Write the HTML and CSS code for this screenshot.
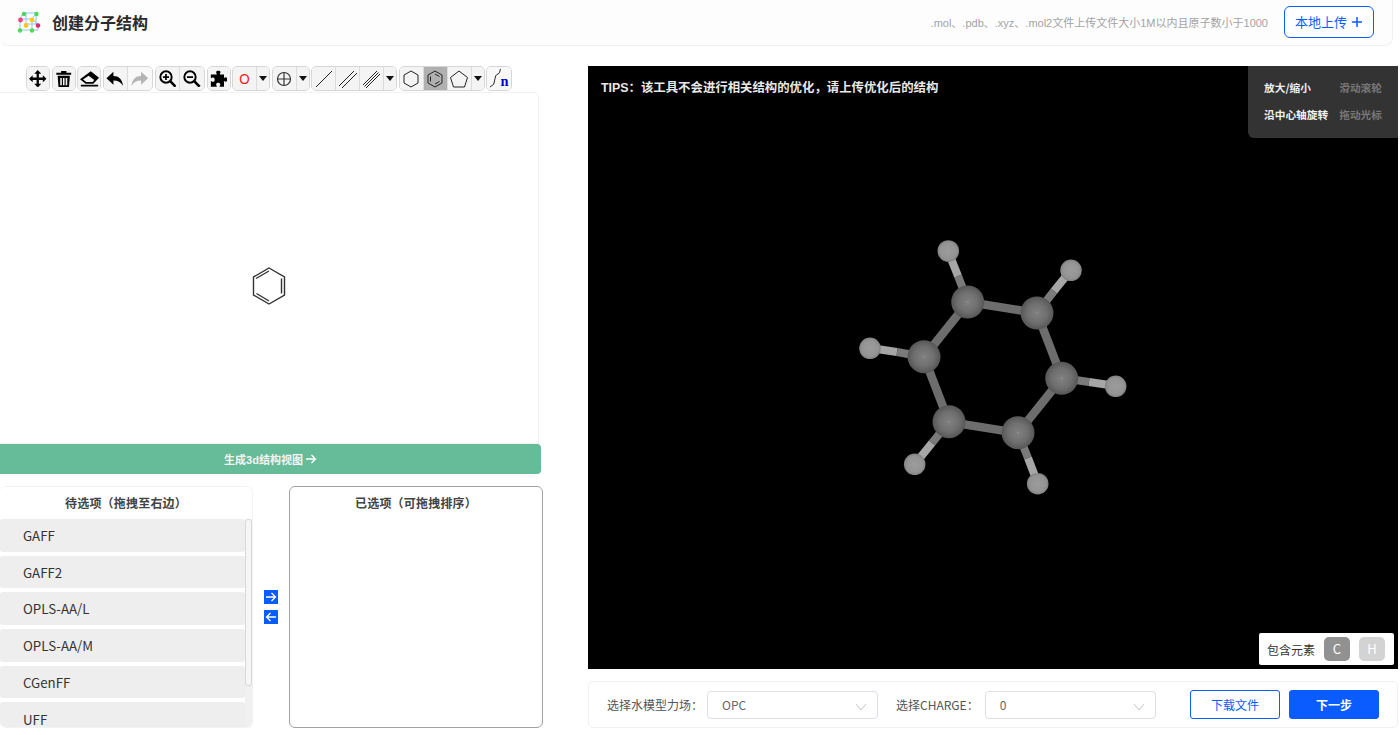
FILE: index.html
```html
<!DOCTYPE html>
<html lang="zh">
<head>
<meta charset="utf-8">
<title>创建分子结构</title>
<link rel="stylesheet" href="styles.css">
</head>
<body>
<header class="header">
  <div class="brand">
    <svg class="logo" viewBox="0 0 24 22" width="24" height="22">
      <g stroke="#8fc7f5" stroke-width="1" fill="none"><path d="M6 2H19M3 8H15V19H3ZM15 8L21 13M6 2L3 8M19 2L15 8M9 13H21V19H15M19 2V13M9 2V13"/></g>
      <circle cx="7" cy="3" r="2.2" fill="#4fd65c"/><circle cx="19.500" cy="3" r="2.2" fill="#4fd65c"/>
      <circle cx="3.500" cy="9" r="2.400" fill="#f0447c"/><circle cx="15" cy="9" r="2.400" fill="#ffc61f"/>
      <circle cx="21" cy="14.500" r="2.300" fill="#e6246e"/><circle cx="9" cy="14.500" r="2.400" fill="#ffc61f"/>
      <circle cx="3" cy="19.500" r="2.200" fill="#4fd65c"/><circle cx="15" cy="19.500" r="2.200" fill="#4fd65c"/>
    </svg>
    <h1 class="title">创建分子结构</h1>
  </div>
  <div class="upload">
    <span class="hint">.mol、.pdb、.xyz、.mol2文件上传文件大小1M以内且原子数小于1000</span>
    <button class="btn-upload">本地上传 <svg viewBox="0 0 12 12" width="12" height="12"><path d="M6 1V11M1 6H11" stroke="#0a5cff" stroke-width="1.500"/></svg></button>
  </div>
</header>

<main class="main">
  <section class="left">
    <div class="toolbar">
      <div class="group solo"><button class="tool"><svg viewBox="0 0 20 20"><path d="M10 0L14 4.200H11.300V8.700H15.800V6L20 10L15.800 14V11.300H11.300V15.800H14L10 20L6 15.800H8.700V11.300H4.200V14L0 10L4.200 6V8.700H8.700V4.200H6Z"/></svg></button></div>
      <div class="group solo"><button class="tool"><svg viewBox="0 0 20 20"><path d="M7 1H13V3H18.500V5.500H1.500V3H7ZM3 6.500H17L16 19.500H4ZM6 9V17.500H7.800V9ZM9.100 9V17.500H10.900V9ZM12.200 9V17.500H14V9Z" fill-rule="evenodd"/></svg></button></div>
      <div class="group solo wide"><button class="tool"><svg viewBox="0 0 22 20"><path d="M12.500 1.500L22 9L15.500 16H6.500L0 11ZM1 17.300H21V19.300H1Z"/><path d="M3.500 11.200L7.300 14H14.500L16.500 11.800L10 6.800Z" fill="#f4f4f4"/></svg></button></div>
      <div class="group filled">
        <button class="tool"><svg viewBox="0 0 20 20"><path d="M8.500 2V6.800C14.500 6.800 18.500 10.500 19.500 18C17 14 13.500 12 8.500 12V16.800L.5 9.300Z"/></svg></button>
        <button class="tool disabled"><svg viewBox="0 0 20 20"><path d="M11.500 2V6.800C5.500 6.800 1.500 10.500 .5 18C3 14 6.500 12 11.500 12V16.800L19.500 9.300Z" fill="#b4b4b4"/></svg></button>
      </div>
      <div class="group filled gap-l">
        <button class="tool"><svg viewBox="0 0 20 20"><circle cx="8" cy="8" r="6.500" fill="none" stroke="#000" stroke-width="2.200"/><path d="M12.500 12.500L19 19" stroke="#000" stroke-width="3"/><path d="M4.500 8H11.500M8 4.500V11.500" stroke="#000" stroke-width="2"/></svg></button>
        <button class="tool"><svg viewBox="0 0 20 20"><circle cx="8" cy="8" r="6.500" fill="none" stroke="#000" stroke-width="2.200"/><path d="M12.500 12.500L19 19" stroke="#000" stroke-width="3"/><path d="M4.500 8H11.500" stroke="#000" stroke-width="2"/></svg></button>
      </div>
      <div class="group solo"><button class="tool"><svg viewBox="0 0 20 20"><path d="M7 2.500C7 .3 12 .3 12 2.500C12 3.500 11.200 4 11.200 5H16V9C17 9 17.500 8.300 18 8.300C20.500 8.300 20.500 13.500 18 13.500C17.500 13.500 17 12.500 16 12.500V19H11C11 18 11.800 17.500 11.800 16.500C11.800 14 7 14 7 16.500C7 17.500 7.800 18 7.800 19H1V12.500C2 12.500 2.500 13.500 3.500 13.500C6 13.500 6 8.500 3.500 8.500C2.500 8.500 2 9.300 1 9.300V5H7.800C7.800 4 7 3.500 7 2.500Z"/></svg></button></div>
      <div class="group">
        <button class="tool"><span class="atom">O</span></button>
        <button class="caret"></button>
      </div>
      <div class="group">
        <button class="tool"><svg viewBox="0 0 20 20" fill="none" stroke="#333" stroke-width="1.200"><circle cx="10" cy="10" r="6.500"/><path d="M10 3.500V16.500M3.500 10H16.500"/></svg></button>
        <button class="caret"></button>
      </div>
      <div class="group">
        <button class="tool"><svg viewBox="0 0 20 20" stroke="#222" fill="none"><path d="M2 18L18 2"/></svg></button>
        <button class="tool"><svg viewBox="0 0 20 20" stroke="#222" fill="none"><path d="M1 17L16 2M4 19L19 4"/></svg></button>
        <button class="tool"><svg viewBox="0 0 20 20" stroke="#222" fill="none"><path d="M1 16L15 2M2.500 17.500L16.500 3.500M4 19L18 5"/></svg></button>
        <button class="caret"></button>
      </div>
      <div class="group">
        <button class="tool"><svg viewBox="0 0 20 20" stroke="#222" fill="none"><path d="M10 2L17 6V14L10 18L3 14V6Z"/></svg></button>
        <button class="tool active"><svg viewBox="0 0 20 20" stroke="#222" fill="none"><path d="M10 2L17 6V14L10 18L3 14V6ZM10 5L14.500 7.500M14.500 12.500L10 15M5.500 12.500V7.500"/></svg></button>
        <button class="tool"><svg viewBox="0 0 20 20" stroke="#222" fill="none"><path d="M10 2L18.500 8.500L15.500 18H4.500L1.500 8.500Z"/></svg></button>
        <button class="caret"></button>
      </div>
      <div class="group"><button class="tool chain"><svg viewBox="0 0 24 22" fill="none"><path d="M2 20L6 17L8 8L12 5L13 1" stroke="#222"/><text x="13" y="19" class="chain-n">n</text></svg></button></div>
    </div>

    <div class="sketch">
      <svg class="benzene" viewBox="0 0 36 40" width="36" height="40" fill="none" stroke="#333" stroke-width="1.400">
        <path d="M18 2L33.500 11V29L18 38L2.500 29V11Z"/>
        <path d="M5 12.500L18 5M30.500 12.500V27.500M5.500 27.500L18 35"/>
      </svg>
    </div>

    <button class="gen">生成3d结构视图 <svg viewBox="0 0 12 12" width="12" height="12" fill="none" stroke="#fff" stroke-width="1.300"><path d="M1 6H10.500M6.500 2L10.500 6L6.500 10"/></svg></button>

    <div class="transfer">
      <div class="list list-source">
        <div class="list-title">待选项（拖拽至右边）</div>
        <div class="list-body">
          <ul class="items">
            <li class="item">GAFF</li>
            <li class="item">GAFF2</li>
            <li class="item">OPLS-AA/L</li>
            <li class="item">OPLS-AA/M</li>
            <li class="item">CGenFF</li>
            <li class="item">UFF</li>
          </ul>
          <div class="scroll"><div class="thumb"></div></div>
        </div>
      </div>
      <div class="arrows">
        <span class="arrow"><svg viewBox="0 0 14 14" width="14" height="14" fill="none" stroke="#fff" stroke-width="1.300"><path d="M2 7H11.500M7.500 3L11.500 7L7.500 11"/></svg></span>
        <span class="arrow"><svg viewBox="0 0 14 14" width="14" height="14" fill="none" stroke="#fff" stroke-width="1.300"><path d="M12 7H2.500M6.500 3L2.500 7L6.500 11"/></svg></span>
      </div>
      <div class="list list-target">
        <div class="list-title">已选项（可拖拽排序）</div>
      </div>
    </div>
  </section>

  <section class="right">
    <div class="viewer">
      <svg class="molecule" viewBox="588 66 810 603" width="810" height="603">
        <defs>
          <radialGradient id="c" cx="50%" cy="50%" r="50%">
            <stop offset="0" stop-color="#969696"/><stop offset=".08" stop-color="#7e7e7e"/><stop offset=".6" stop-color="#6f6f6f"/><stop offset="1" stop-color="#565656"/>
          </radialGradient>
          <radialGradient id="h" cx="50%" cy="50%" r="50%">
            <stop offset="0" stop-color="#9c9c9c"/><stop offset=".75" stop-color="#949494"/><stop offset="1" stop-color="#808080"/>
          </radialGradient>
        </defs>
        <g class="bond-ch">
          <path d="M968 302L958 276M1037 313L1054 291M1062 378L1089 382M1018 433L1028 458M949 422L932 443M924 357L897 352"/>
        </g>
        <g class="bond-hh">
          <path d="M958 276L948 251M1054 291L1071 270M1089 382L1116 386M1028 458L1038 484M932 443L915 464M897 352L870 348"/>
        </g>
        <path class="bond-cc" d="M968 302L1037 313L1062 378L1018 433L949 422L924 357Z"/>
        <g fill="url(#h)">
          <circle cx="948.300" cy="251" r="10.800"/><circle cx="1071" cy="270.300" r="10.800"/><circle cx="1115.700" cy="386.300" r="10.800"/>
          <circle cx="1037.700" cy="483.700" r="10.800"/><circle cx="914.700" cy="464.300" r="10.800"/><circle cx="870" cy="348.300" r="10.800"/>
        </g>
        <g fill="url(#c)">
          <circle cx="967.700" cy="302" r="16.500"/><circle cx="1037" cy="313" r="16.500"/><circle cx="1061.700" cy="378.300" r="16.500"/>
          <circle cx="1018" cy="432.700" r="16.500"/><circle cx="949" cy="421.700" r="16.500"/><circle cx="924" cy="356.700" r="16.500"/>
        </g>
      </svg>
      <p class="tips">TIPS：该工具不会进行相关结构的优化，请上传优化后的结构</p>
      <div class="help">
        <div class="help-row"><span>放大/缩小</span><span class="help-key">滑动滚轮</span></div>
        <div class="help-row"><span>沿中心轴旋转</span><span class="help-key">拖动光标</span></div>
      </div>
      <div class="elements">
        <span class="el-label">包含元素</span>
        <span class="chip chip-c">C</span>
        <span class="chip chip-h">H</span>
      </div>
    </div>
    <div class="options">
      <label class="field field-water">选择水模型力场：<span class="select"><span>OPC</span><svg class="chev" viewBox="0 0 12 8" width="12" height="8" fill="none" stroke="#c4c4c4"><path d="M1 1L6 7L11 1"/></svg></span></label>
      <label class="field field-charge">选择CHARGE：<span class="select"><span>0</span><svg class="chev" viewBox="0 0 12 8" width="12" height="8" fill="none" stroke="#c4c4c4"><path d="M1 1L6 7L11 1"/></svg></span></label>
      <div class="actions">
        <button class="btn btn-outline">下载文件</button>
        <button class="btn btn-primary">下一步</button>
      </div>
    </div>
  </section>
</main>
</body>
</html>
```
FILE: styles.css
```css
* { box-sizing: border-box; }
html, body { margin: 0; padding: 0; }
body {
  width: 1400px;
  height: 735px;
  overflow: hidden;
  background: #fff;
  font-family: "Noto Sans CJK SC", "Noto Sans", sans-serif;
  color: #333;
}
button { font-family: inherit; cursor: pointer; padding: 0; }

.header {
  width: 1393px;
  height: 47px;
  margin-top: -1px;
  display: flex;
  align-items: center;
  justify-content: space-between;
  padding: 0 18px 2px 17px;
  background: #fdfdfd;
  border: 1px solid #f0f0f0;
  border-left: 0;
  border-radius: 0 0 8px 8px;
}
.brand { display: flex; align-items: center; gap: 11px; }
.logo { display: block; }
.title { margin: 0; font-size: 16px; font-weight: 700; line-height: 24px; color: #2b2b2b; }
.upload { display: flex; align-items: center; gap: 16px; }
.hint { font-size: 11px; color: #a3a3a3; font-family: "Liberation Sans", "Noto Sans CJK SC", sans-serif; }
.btn-upload {
  width: 90px; height: 32px;
  display: flex; align-items: center; justify-content: center; gap: 4px;
  background: #fff; border: 1px solid #0a5cff; border-radius: 6px;
  color: #0a5cff; font-size: 13px;
}

.main { display: flex; margin-top: 20px; }
.left { width: 588px; flex: none; }
.right { width: 810px; flex: none; }

.toolbar { display: flex; height: 26px; padding-left: 26px; }
.group {
  display: flex; height: 25px; margin-right: 1.500px;
  border: 1px solid #d6d6d6; border-radius: 5px; overflow: hidden; background: #f4f4f4;
}
.gap-l { margin-left: 1px; }
.tool {
  width: 24px; height: 100%; flex: none;
  display: flex; align-items: center; justify-content: center;
  border: 0; border-right: 1px solid #dcdcdc; background: #f4f4f4;
}
.tool:last-child { border-right: 0; }
.solo .tool { width: 22px; }
.tool svg { width: 20px; height: 20px; display: block; flex: none; }
.solo .tool svg, .filled .tool svg { width: 17.500px; height: 17.500px; }
.wide .tool svg { width: 19px; height: 19px; }
.tool.disabled { background: #f8f8f8; }
.tool.active { background: #b0b0b0; }
.tool.chain { background: #f8f8f8; }
.tool.chain svg { width: 23px; height: 21px; }
.chain-n { font-family: "Liberation Serif", serif; font-weight: 700; font-size: 15px; fill: #0000c8; }
.atom { font-size: 14px; color: #f01818; line-height: 1; font-family: "Noto Sans", sans-serif; }
.caret {
  width: 12px; height: 100%; flex: none; border: 0; background: #f4f4f4;
  display: flex; align-items: center; justify-content: center;
}
.caret::after {
  content: ""; width: 0; height: 0;
  border-left: 4px solid transparent; border-right: 4px solid transparent; border-top: 5px solid #111;
}

.sketch {
  width: 539px; height: 352px; margin-top: 0;
  background: #fff; border: 1px solid #f2f2f2; border-left: 0; border-radius: 0 5px 0 0;
  display: flex; align-items: flex-start; justify-content: flex-start;
  padding: 173px 0 0 251px;
}
.benzene { display: block; }
.gen {
  width: 541px; height: 30px; margin-top: 0;
  display: flex; align-items: center; justify-content: center; gap: 2px;
  background: #66bb98; border: 0; border-radius: 0 4px 4px 0;
  color: #f4f4f4; font-size: 11px; font-weight: 700;
  font-family: "Liberation Sans", "Noto Sans CJK SC", sans-serif;
}

.transfer { display: flex; margin-top: 12px; height: 242px; width: 543px; }
.list { background: #fff; border-radius: 6px; display: flex; flex-direction: column; flex: none; }
.list-source { width: 253px; border: 1px solid #f3f3f3; border-left: 0; overflow: hidden; }
.list-target { width: 254px; border: 1px solid #a2a2a2; }
.list-title { height: 32px; line-height: 31px; text-align: center; font-size: 12px; letter-spacing: .2px; font-weight: 700; color: #444; flex: none; }
.list-body { flex: 1; min-height: 0; display: flex; overflow: hidden; }
.items { list-style: none; margin: 0; padding: 0; width: 245px; flex: none; display: flex; flex-direction: column; gap: 4px; }
.item {
  height: 32.700px; flex: none; line-height: 33px; padding-left: 23px;
  background: #eee; border-radius: 3px; font-size: 13.300px; color: #333;
}
.item:last-child { line-height: 35px; }
.scroll { flex: 1; background: #f0f0f0; }
.thumb { height: 167px; background: #f6f6f6; border: 1px solid #d8d8d8; border-radius: 3px; }
.arrows { width: 36px; flex: none; display: flex; flex-direction: column; align-items: center; justify-content: center; gap: 6px; }
.arrow { width: 14px; height: 14px; background: #0a5cff; display: block; }
.arrow svg { display: block; }

.viewer { position: relative; width: 810px; height: 603px; background: #000; overflow: hidden; }
.molecule { display: block; }
.bond-cc { fill: none; stroke: #6d6d6d; stroke-width: 8.500; }
.bond-ch { fill: none; stroke: #7a7a7a; stroke-width: 8; }
.bond-hh { fill: none; stroke: #a6a6a6; stroke-width: 8; }
.tips {
  position: absolute; left: 13px; top: 13px; margin: 0;
  font-family: "Liberation Sans", "Noto Sans CJK SC", sans-serif;
  font-size: 12.400px; font-weight: 700; line-height: 18px; color: #e8e8e8;
}
.help {
  position: absolute; right: 0; top: 0; width: 150px; height: 72px;
  padding: 8px 16px 0; background: #333; border-radius: 0 0 0 6px;
  display: flex; flex-direction: column;
}
.help-row { display: flex; justify-content: space-between; height: 27px; align-items: center; font-size: 10.700px; font-weight: 700; color: #f0f0f0; }
.help-key { color: #777; }
.elements {
  position: absolute; left: 671px; top: 567px; width: 135px; height: 32px;
  display: flex; align-items: center; padding-left: 8px;
  background: #fff; border-radius: 2px;
}
.el-label { font-size: 12px; color: #333; width: 57px; flex: none; }
.chip { width: 26px; height: 24px; border-radius: 5px; color: #fff; font-size: 13px; text-align: center; line-height: 24px; flex: none; }
.chip-c { background: #919191; }
.chip-h { background: #d3d3d3; margin-left: 9px; }

.options {
  margin-top: 12px; height: 47px; display: flex; align-items: center;
  padding: 0 18px; border: 1px solid #f0f0f0; border-radius: 5px; background: #fff;
}
.field { display: flex; align-items: center; font-size: 12px; color: #555; }
.field-water { width: 289px; }
.field-charge { width: 260px; }
.select {
  width: 171px; height: 28px; display: flex; align-items: center; justify-content: space-between;
  padding: 0 10px 0 14px; border: 1px solid #dedee6; border-radius: 4px; color: #666; font-size: 12px;
}
.field-water .select { margin-left: 4px; }
.field-charge .select { margin-left: 6px; }
.chev { margin-top: 4px; }
.actions { margin-left: auto; display: flex; gap: 9px; }
.btn { width: 90px; height: 29px; border-radius: 3px; font-size: 12px; }
.btn-outline { background: #fff; border: 1px solid #0a5cff; color: #0a5cff; }
.btn-primary { background: #0a5cff; border: 1px solid #0a5cff; color: #fff; font-weight: 700; }
```
